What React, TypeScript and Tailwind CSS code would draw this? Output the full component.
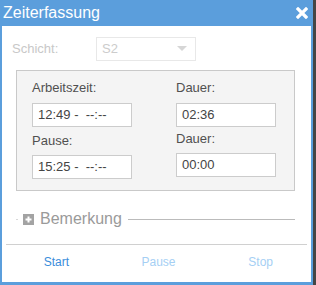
import React from "react";

export default function App() {
  const font = { fontFamily: '"Liberation Sans", Arial, sans-serif' };
  return (
    <div className="flex w-[316px] h-[285px] bg-[#454545]" style={font}>
      <div className="w-[313px] h-[285px] flex flex-col bg-[#5b9edc]">
        {/* title bar */}
        <div className="h-[26px] flex items-center justify-between pl-[3px] pr-[6px]">
          <span className="text-[16px] leading-[18px] text-white">Zeiterfassung</span>
          <svg width="12" height="12" viewBox="0 0 12 12" className="mr-[-1px]">
            <path d="M2 2 L10 10 M10 2 L2 10" stroke="white" strokeWidth="3.2" strokeLinecap="square" />
          </svg>
        </div>
        {/* content */}
        <div className="mx-[2px] mb-[3px] flex-1 bg-white flex flex-col">
          {/* Schicht */}
          <div className="mt-[11px] h-[24px] flex items-center">
            <span className="pl-[10px] w-[94px] text-[13px] text-[#c8c8c8]">Schicht:</span>
            <div className="w-[100px] h-[24px] border border-[#e8e8e8] flex items-center justify-between pl-[5px] pr-[8px]">
              <span className="text-[13px] text-[#cccccc]">S2</span>
              <svg width="10" height="6" viewBox="0 0 10 6">
                <path d="M0 0 L10 0 L5 5 Z" fill="#d6d6d6" />
              </svg>
            </div>
          </div>
          {/* time fieldset */}
          <div className="mt-[9px] ml-[14px] w-[279px] h-[121px] border border-[#c9c9c9] bg-[#f4f4f4] flex pl-[15px]">
            <div className="w-[144px] flex flex-col pt-[9px]">
              <div className="h-[16px] leading-[16px] text-[13px] text-[#505050]">Arbeitszeit:</div>
              <div className="mt-[7px] w-[100px] h-[24px] border border-[#cccccc] bg-white flex items-center pl-[5px] text-[13px] text-[#444] whitespace-pre">
                12:49 -  --:--
              </div>
              <div className="mt-[6px] h-[16px] leading-[16px] text-[13px] text-[#505050]">Pause:</div>
              <div className="mt-[6px] w-[100px] h-[24px] border border-[#cccccc] bg-white flex items-center pl-[5px] text-[13px] text-[#444] whitespace-pre">
                15:25 -  --:--
              </div>
            </div>
            <div className="w-[100px] flex flex-col pt-[9px]">
              <div className="h-[16px] leading-[16px] text-[13px] text-[#505050]">Dauer:</div>
              <div className="mt-[7px] w-[100px] h-[24px] border border-[#cccccc] bg-white flex items-center pl-[5px] text-[13px] text-[#444]">
                02:36
              </div>
              <div className="mt-[4px] h-[16px] leading-[16px] text-[13px] text-[#505050]">Dauer:</div>
              <div className="mt-[6px] w-[100px] h-[24px] border border-[#cccccc] bg-white flex items-center pl-[5px] text-[13px] text-[#444]">
                00:00
              </div>
            </div>
          </div>
          {/* Bemerkung legend */}
          <div className="mt-[18px] ml-[14px] w-[279px] h-[20px] flex items-center">
            <div className="w-[2px] h-px bg-[#d8d8d8]" />
            <div className="ml-[5px] w-[11px] h-[11px] bg-[#a3a3a3] flex items-center justify-center">
              <svg width="11" height="11" viewBox="0 0 11 11">
                <path d="M5.5 2.5 V8.5 M2.5 5.5 H8.5" stroke="white" strokeWidth="2" />
              </svg>
            </div>
            <span className="ml-[6px] text-[16px] leading-[20px] text-[#9a9a9a]">Bemerkung</span>
            <div className="ml-[6px] flex-1 h-px bg-[#bbbbbb]" />
          </div>
          {/* separator */}
          <div className="mt-[15px] mx-[4px] h-px bg-[#d0d0d0]" />
          {/* buttons */}
          <div className="h-[34px] flex items-center pl-[4px] text-[12px]">
            <div className="w-[104px] text-center text-[#3a8ddb]">Start</div>
            <div className="w-[107px] text-center text-[#a5cff4]">Pause</div>
            <div className="w-[104px] text-center text-[#a5cff4]">Stop</div>
          </div>
        </div>
      </div>
    </div>
  );
}
